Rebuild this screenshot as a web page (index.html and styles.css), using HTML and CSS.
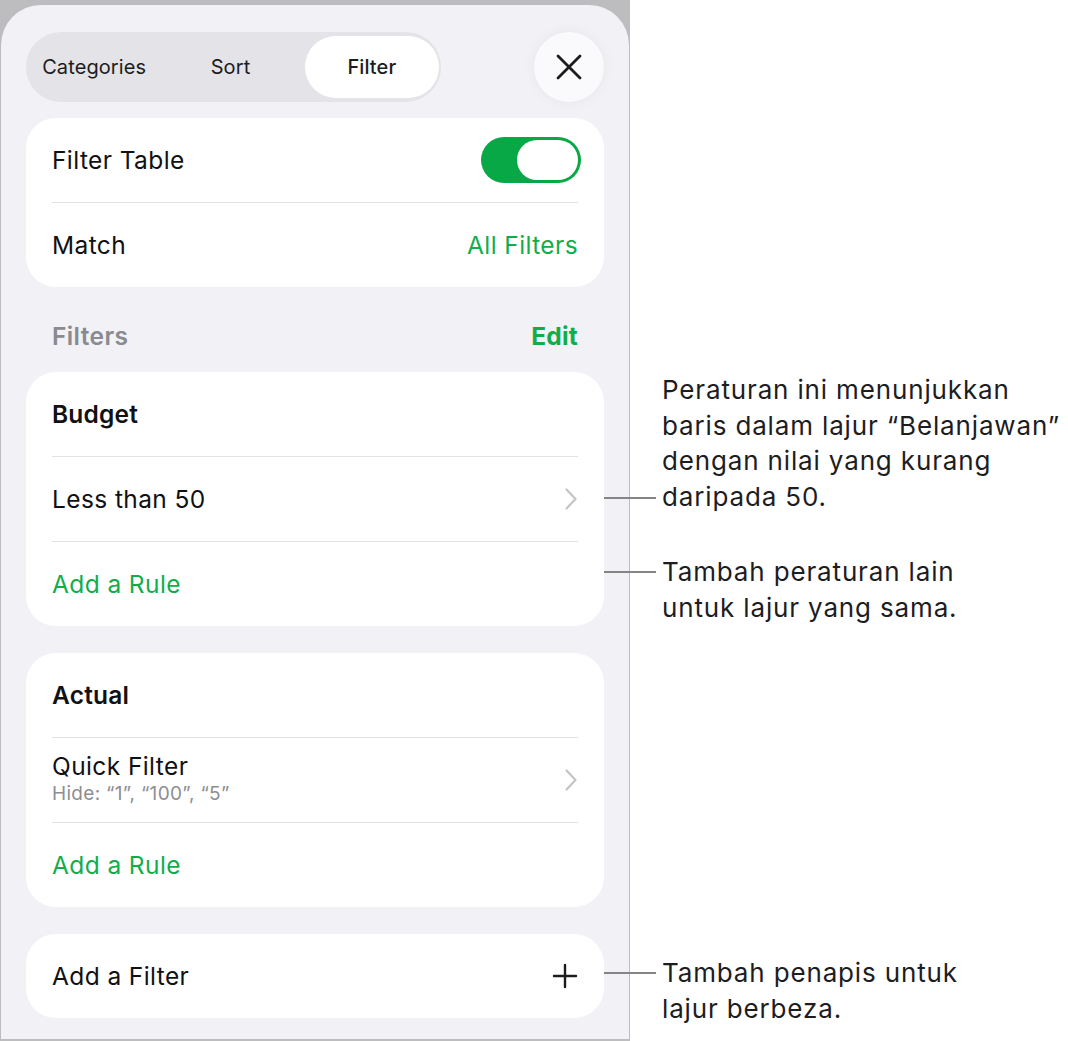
FILE: index.html
```html
<!DOCTYPE html>
<html lang="ms">
<head>
<meta charset="utf-8">
<title>Filter</title>
<link rel="stylesheet" href="styles.css">
</head>
<body>
<div class="page">
  <div class="frame">
    <div class="sheet">
      <div class="topbar">
        <div class="segmented">
          <div class="seg">Categories</div>
          <div class="seg">Sort</div>
          <div class="seg seg-on"><span class="pill">Filter</span></div>
        </div>
        <div class="close">
          <svg width="28" height="28" viewBox="0 0 28 28"><path d="M3 3 L25 25 M25 3 L3 25" stroke="#1c1c1e" stroke-width="2.8" stroke-linecap="round" fill="none"/></svg>
        </div>
      </div>

      <div class="card">
        <div class="row">
          <span class="label">Filter Table</span>
          <span class="toggle"><span class="knob"></span></span>
        </div>
        <div class="row">
          <span class="label">Match</span>
          <span class="green">All Filters</span>
        </div>
      </div>

      <div class="section-head">
        <span class="section-title">Filters</span>
        <span class="edit">Edit</span>
      </div>

      <div class="card">
        <div class="row"><span class="label bold">Budget</span></div>
        <div class="row">
          <span class="label">Less than 50</span>
          <svg class="chev" width="14" height="24" viewBox="0 0 14 24"><path d="M2.5 2.5 L11.5 12 L2.5 21.5" stroke="#c4c4c7" stroke-width="2.2" stroke-linecap="round" stroke-linejoin="round" fill="none"/></svg>
        </div>
        <div class="row"><span class="green">Add a Rule</span></div>
      </div>

      <div class="card card-gap">
        <div class="row"><span class="label bold">Actual</span></div>
        <div class="row">
          <div class="stack">
            <span class="label">Quick Filter</span>
            <span class="sub">Hide: “1”, “100”, “5”</span>
          </div>
          <svg class="chev" width="14" height="24" viewBox="0 0 14 24"><path d="M2.5 2.5 L11.5 12 L2.5 21.5" stroke="#c4c4c7" stroke-width="2.2" stroke-linecap="round" stroke-linejoin="round" fill="none"/></svg>
        </div>
        <div class="row"><span class="green">Add a Rule</span></div>
      </div>

      <div class="card card-gap">
        <div class="row">
          <span class="label">Add a Filter</span>
          <svg width="26" height="26" viewBox="0 0 26 26"><path d="M13 2 V24 M2 13 H24" stroke="#1c1c1e" stroke-width="2.4" stroke-linecap="round" fill="none"/></svg>
        </div>
      </div>
    </div>
  </div>

  <div class="note note-1">Peraturan ini menunjukkan<br>baris dalam lajur “Belanjawan”<br>dengan nilai yang kurang<br>daripada 50.</div>
  <div class="note note-2">Tambah peraturan lain<br>untuk lajur yang sama.</div>
  <div class="note note-3">Tambah penapis untuk<br>lajur berbeza.</div>
</div>
</body>
</html>
```

FILE: styles.css
```css
* { box-sizing: border-box; }

html, body {
  margin: 0;
  padding: 0;
  background: #ffffff;
}

body {
  font-family: Inter, "Noto Sans", "Liberation Sans", sans-serif;
  color: #1c1c1e;
}

.page {
  position: relative;
  width: 1068px;
  height: 1041px;
}

.frame {
  width: 630px;
  height: 1041px;
  padding: 5px 1px 2px 1px;
  background: #bdbdc0;
  display: flex;
  flex-direction: column;
}

.sheet {
  flex: 1;
  background: #f1f1f6;
  border-radius: 40px 40px 0 0;
  padding: 27px 25px 0 25px;
  display: flex;
  flex-direction: column;
}

.topbar {
  display: flex;
  justify-content: space-between;
  align-items: center;
  margin-bottom: 16px;
}

.segmented {
  width: 415px;
  height: 70px;
  border-radius: 35px;
  background: #e3e3e8;
  display: flex;
  align-items: stretch;
}

.seg {
  flex: 1;
  display: flex;
  align-items: center;
  justify-content: center;
  font-size: 20px;
  letter-spacing: 0.1px;
  color: #1c1c1e;
}

.seg-on {
  padding: 3px 1px 3px 5px;
}

.pill {
  width: 100%;
  height: 100%;
  border-radius: 32px;
  background: #ffffff;
  border: 1px solid #e4e4e9;
  display: flex;
  align-items: center;
  justify-content: center;
  font-weight: 500;
}

.close {
  width: 70px;
  height: 70px;
  border-radius: 50%;
  background: #fafafc;
  box-shadow: 0 0 14px rgba(0, 0, 0, 0.05);
  display: flex;
  align-items: center;
  justify-content: center;
}

.card {
  background: #ffffff;
  border-radius: 30px;
  display: flex;
  flex-direction: column;
}

.card-gap {
  margin-top: 27px;
}

.row {
  height: 84px;
  margin: 0 26px;
  display: flex;
  align-items: center;
  justify-content: space-between;
}

.row + .row {
  border-top: 1px solid #e3e3e6;
  height: 85px;
}

.label {
  font-size: 24.5px;
  letter-spacing: 0.4px;
  color: #111113;
}

.bold {
  font-weight: 600;
  letter-spacing: 0.2px;
}

.green {
  font-size: 24.5px;
  letter-spacing: 0.4px;
  color: #12ad4b;
}

.stack {
  display: flex;
  flex-direction: column;
  padding-bottom: 3px;
}

.stack .label {
  line-height: 30px;
}

.sub {
  font-size: 19px;
  line-height: 25px;
  letter-spacing: 0.3px;
  color: #8e8e93;
}

.chev {
  margin-right: 0;
}

.toggle {
  width: 100px;
  height: 46px;
  border-radius: 23px;
  background: #08a846;
  display: flex;
  align-items: center;
  justify-content: flex-end;
  padding: 3px;
  margin-right: -3px;
}

.knob {
  width: 61px;
  height: 40px;
  border-radius: 20px;
  background: #ffffff;
}

.section-head {
  height: 72px;
  margin-top: 13px;
  padding: 0 26px;
  display: flex;
  align-items: center;
  justify-content: space-between;
}

.section-title {
  font-size: 24.5px;
  font-weight: 600;
  letter-spacing: 0.4px;
  color: #8a8a8f;
}

.edit {
  font-size: 24.5px;
  font-weight: 700;
  letter-spacing: 0.2px;
  color: #12ad4b;
}

.note {
  position: absolute;
  left: 662px;
  font-size: 26px;
  line-height: 35.5px;
  letter-spacing: 0.85px;
  color: #1d1d1f;
  white-space: nowrap;
}

.note::before {
  content: "";
  position: absolute;
  left: -58px;
  width: 52px;
  height: 2px;
  background: #858585;
}

.note-1 { top: 372px; }
.note-1::before { top: 125px; }

.note-2 { top: 554px; }
.note-2::before { top: 17px; }

.note-3 { top: 955px; }
.note-3::before { top: 17px; }
```
